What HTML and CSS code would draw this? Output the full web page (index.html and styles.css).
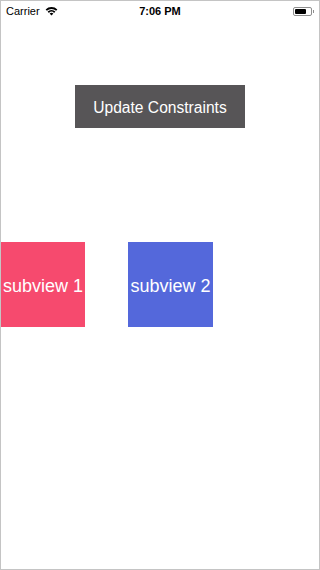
FILE: index.html
```html
<!DOCTYPE html>
<html>
<head>
<meta charset="utf-8">
<link rel="stylesheet" href="styles.css">
</head>
<body>
<div class="screen">
  <div class="status">
    <div class="status-left">
      <span class="carrier">Carrier</span>
      <svg class="wifi" width="13" height="10" viewBox="0 0 13 10">
        <path d="M0.6 3.4 A8.5 8.5 0 0 1 12.4 3.4 L11.1 4.8 A6.6 6.6 0 0 0 1.9 4.8 Z" fill="#000"/>
        <path d="M2.6 5.5 A5.6 5.6 0 0 1 10.4 5.5 L9.1 6.9 A3.7 3.7 0 0 0 3.9 6.9 Z" fill="#000"/>
        <path d="M4.6 7.6 A2.7 2.7 0 0 1 8.4 7.6 L6.5 9.6 Z" fill="#000"/>
      </svg>
    </div>
    <span class="time">7:06 PM</span>
    <div class="status-right">
      <div class="battery"><div class="battery-level"></div></div>
      <div class="battery-nub"></div>
    </div>
  </div>
  <div class="content">
    <div class="button">Update Constraints</div>
    <div class="row">
      <div class="box box-pink">subview 1</div>
      <div class="box box-blue">subview 2</div>
    </div>
  </div>
</div>
</body>
</html>
```
FILE: styles.css
```css
html, body {
  margin: 0;
  padding: 0;
  background: #fff;
}
.screen {
  width: 320px;
  height: 570px;
  box-sizing: border-box;
  border: 1px solid #c4c4c4;
  background: #fff;
  font-family: "Liberation Sans", Arial, sans-serif;
  overflow: hidden;
}
.status {
  height: 20px;
  display: flex;
  align-items: center;
  justify-content: space-between;
  padding: 0 5px 0 5px;
}
.status-left {
  display: flex;
  align-items: center;
  gap: 5px;
  width: 80px;
}
.carrier {
  font-size: 11px;
  color: #000;
}
.wifi {
  display: block;
}
.time {
  font-size: 11px;
  font-weight: 700;
  color: #000;
}
.status-right {
  display: flex;
  align-items: center;
  justify-content: flex-end;
  width: 80px;
}
.battery {
  width: 15px;
  height: 5px;
  border: 1px solid #8e8e8e;
  border-radius: 2px;
  padding: 1px;
}
.battery-level {
  width: 11px;
  height: 5px;
  background: #000;
  border-radius: 1px;
}
.battery-nub {
  width: 1px;
  height: 3px;
  background: #8e8e8e;
  margin-left: 1px;
}
.content {
  display: flex;
  flex-direction: column;
}
.button {
  margin: 64px 0 0 74px;
  width: 170px;
  height: 43px;
  box-sizing: border-box;
  padding-top: 2px;
  background: #575557;
  color: #fff;
  font-size: 15.6px;
  display: flex;
  align-items: center;
  justify-content: center;
}
.row {
  display: flex;
  margin-top: 114px;
  gap: 43px;
}
.box {
  height: 85px;
  box-sizing: border-box;
  padding-top: 3px;
  display: flex;
  align-items: center;
  justify-content: center;
  color: #fff;
  font-size: 18px;
  white-space: nowrap;
}
.box-pink {
  width: 84px;
  background: #f64a6e;
}
.box-blue {
  width: 85px;
  background: #5468db;
}
```
